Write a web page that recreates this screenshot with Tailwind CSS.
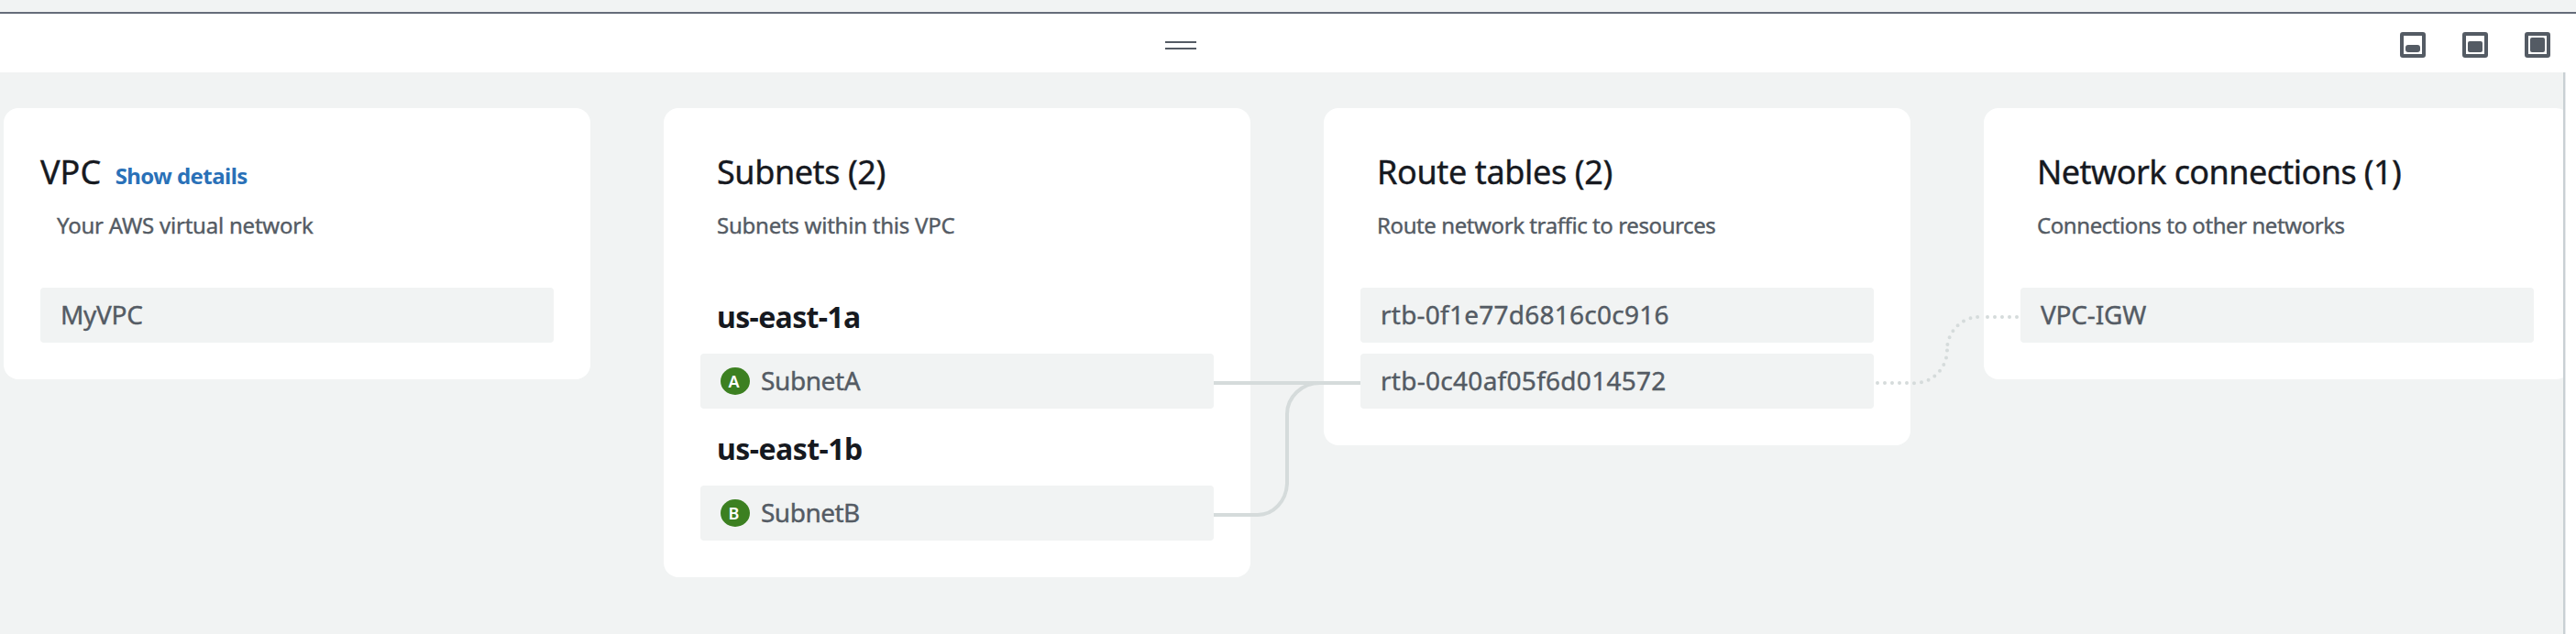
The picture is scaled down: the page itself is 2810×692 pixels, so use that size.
<!DOCTYPE html>
<html lang="en">
<head>
<meta charset="utf-8">
<title>VPC resource map</title>
<script src="https://cdn.jsdelivr.net/npm/@tailwindcss/browser@4"></script>
</head>
<body class="flex h-[692px] w-[2810px] flex-col overflow-hidden bg-white font-['Noto_Sans','Open_Sans',sans-serif] text-[#16191f]">
  <div class="h-[13px] shrink-0 bg-[#f1f3f3]"></div>

  <!-- Split panel toolbar -->
  <header class="flex h-[66px] shrink-0 justify-between border-t-2 border-[#656c79]">
    <div class="flex flex-col gap-[5px] pt-[30px] pl-[1271px]">
      <div class="h-0.5 w-[34px] bg-[#545b64]"></div>
      <div class="h-0.5 w-[34px] bg-[#545b64]"></div>
    </div>
    <div class="flex items-start justify-end gap-10 pt-5 pr-7">
      <svg width="28" height="28" viewBox="0 0 28 28" fill="#545b64"><rect x="2" y="2" width="24" height="24" rx="1" fill="none" stroke="#545b64" stroke-width="4"/><rect x="6" y="14" width="16" height="8" rx="3"/></svg>
      <svg width="28" height="28" viewBox="0 0 28 28" fill="#545b64"><rect x="2" y="2" width="24" height="24" rx="1" fill="none" stroke="#545b64" stroke-width="4"/><rect x="6" y="10" width="16" height="12" rx="2"/></svg>
      <svg width="28" height="28" viewBox="0 0 28 28" fill="#545b64"><rect x="2" y="2" width="24" height="24" rx="1" fill="none" stroke="#545b64" stroke-width="4"/><rect x="6" y="6" width="16" height="16" rx="2"/></svg>
    </div>
  </header>

  <main class="flex min-h-0 flex-1">
    <div class="relative flex w-[2796px] shrink-0 items-start gap-20 overflow-hidden bg-[#f1f3f3] pt-[39px] pl-1 [-webkit-text-stroke:0.4px]">
      <section class="w-[640px] shrink-0 rounded-2xl bg-white px-10 pt-12 pb-10">
        <div class="flex items-baseline gap-[15.5px]">
          <h2 class="text-[36px] leading-[44px]">VPC</h2>
          <a class="text-[24px] leading-9 font-bold tracking-[-0.56px] text-[#2a71b8] [-webkit-text-stroke:0]">Show details</a>
        </div>
        <p class="mt-[18px] pl-[18px] text-[24px] leading-9 tracking-[-0.22px] text-[#545b64]">Your AWS virtual network</p>
        <div class="mt-[50px] h-[60px] rounded bg-[#f1f3f3] px-[22px] text-[28px] leading-[58px] tracking-[-0.3px] text-[#545b64]">MyVPC</div>
      </section>

      <section class="w-[640px] shrink-0 rounded-2xl bg-white px-10 pt-12 pb-10">
        <h2 class="pl-[18px] text-[36px] leading-[44px] tracking-[-0.42px]">Subnets (2)</h2>
        <p class="mt-[18px] pl-[18px] text-[24px] leading-9 tracking-[-0.24px] text-[#545b64]">Subnets within this VPC</p>
        <h3 class="mt-[50px] h-[72px] pl-[18px] text-[32px] leading-[64px] font-bold tracking-[-0.65px] [-webkit-text-stroke:0]">us-east-1a</h3>
        <div class="flex h-[60px] items-center gap-3 rounded bg-[#f1f3f3] px-[22px] text-[28px] text-[#545b64]">
          <span class="flex h-[30px] w-8 items-center justify-center rounded-[50%] bg-[#3c8021] pr-[3px] text-[18px] leading-[30px] font-semibold text-white [-webkit-text-stroke:0]">A</span>
          <span class="-mt-0.5 leading-[58px] tracking-[-0.4px]">SubnetA</span>
        </div>
        <h3 class="mt-3 h-[72px] pl-[18px] text-[32px] leading-[64px] font-bold tracking-[-0.55px] [-webkit-text-stroke:0]">us-east-1b</h3>
        <div class="flex h-[60px] items-center gap-3 rounded bg-[#f1f3f3] px-[22px] text-[28px] text-[#545b64]">
          <span class="flex h-[30px] w-8 items-center justify-center rounded-[50%] bg-[#3c8021] pr-[3px] text-[18px] leading-[30px] font-semibold text-white [-webkit-text-stroke:0]">B</span>
          <span class="-mt-0.5 leading-[58px] tracking-[-0.5px]">SubnetB</span>
        </div>
      </section>

      <section class="w-[640px] shrink-0 rounded-2xl bg-white px-10 pt-12 pb-10">
        <h2 class="pl-[18px] text-[36px] leading-[44px] tracking-[-0.37px]">Route tables (2)</h2>
        <p class="mt-[18px] pl-[18px] text-[24px] leading-9 tracking-[-0.41px] text-[#545b64]">Route network traffic to resources</p>
        <div class="mt-[50px] flex flex-col gap-3 text-[28px] leading-[58px] text-[#545b64]">
          <div class="h-[60px] rounded bg-[#f1f3f3] px-[22px] tracking-[0.24px]">rtb-0f1e77d6816c0c916</div>
          <div class="h-[60px] rounded bg-[#f1f3f3] px-[22px] tracking-[0.28px]">rtb-0c40af05f6d014572</div>
        </div>
      </section>

      <section class="w-[640px] shrink-0 rounded-2xl bg-white px-10 pt-12 pb-10">
        <h2 class="pl-[18px] text-[36px] leading-[44px] tracking-[-0.57px]">Network connections (1)</h2>
        <p class="mt-[18px] pl-[18px] text-[24px] leading-9 tracking-[-0.43px] text-[#545b64]">Connections to other networks</p>
        <div class="mt-[50px] h-[60px] rounded bg-[#f1f3f3] px-[22px] text-[28px] leading-[58px] tracking-[-0.2px] text-[#545b64]">VPC-IGW</div>
      </section>

      <!-- Connectors between resources -->
      <svg class="pointer-events-none absolute top-0 left-0" width="2796" height="613" viewBox="0 79 2796 613" fill="none" stroke="#d5dbdb" stroke-width="4">
        <path d="M1324 418H1484"/>
        <path d="M1324 562H1372A32 36 0 0 0 1404 528V452A36 34 0 0 1 1440 418"/>
        <path stroke-linecap="round" d="M2048 418h0M2056 418h0M2064 418h0M2072 418h0M2080 418h0M2088 418.2h0M2096 417.3h0M2103.6 414.7h0M2110.3 410.5h0M2116 404.8h0M2120.3 398h0M2123 390.5h0M2124 382.5h0M2124.4 376h0M2126.6 368.3h0M2130.4 361.2h0M2135.6 355.2h0M2142 350.5h0M2149.5 347.3h0M2157.1 345.9h0M2168 346h0M2176 346h0M2184 346h0M2192 346h0M2200 346h0"/>
      </svg>
    </div>
    <div class="w-[3px] border-l-2 border-[#c9d0d4] bg-[#e9ebed]"></div>
  </main>
</body>
</html>
